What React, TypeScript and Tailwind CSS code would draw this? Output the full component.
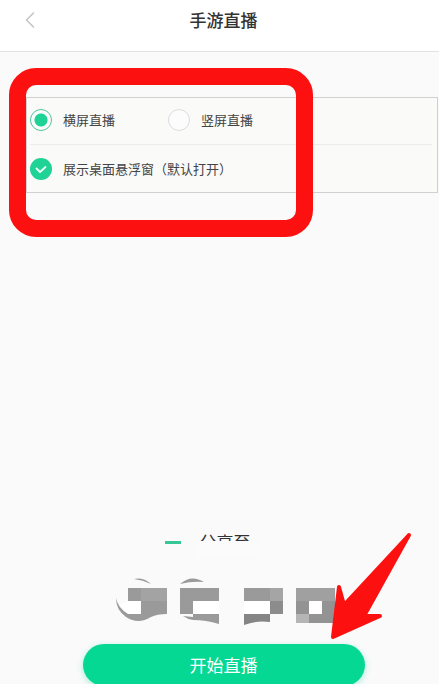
import { ChevronLeft } from "lucide-react";

interface Orientation {
    id: string;
    label: string;
}

const orientations: Orientation[] = [
    { id: "landscape", label: "横屏直播" },
    { id: "portrait", label: "竖屏直播" },
];

const Header = () => {
    return (
        <header className="flex h-[52px] shrink-0 items-center border-b border-[#e2e2e2] bg-white pr-3 pb-3 pl-4">
            <button type="button" aria-label="返回" className="text-[#c4c4c4]">
                <ChevronLeft className="size-7" strokeWidth={1.3} />
            </button>
            <h1 className="flex-1 pr-6 text-center text-[17px] leading-6 font-medium text-[#333]">手游直播</h1>
        </header>
    );
};

const OrientationRow = () => {
    return (
        <div className="flex h-[47px] items-center gap-[53px] border-b border-[#ececec] pb-0.5">
            {orientations.map((item, index) => (
                <label key={item.id} htmlFor={item.id} className="flex items-center gap-[11px]">
                    <input
                        id={item.id}
                        type="radio"
                        name="orientation"
                        defaultChecked={index === 0}
                        className="size-[22px] appearance-none rounded-full border border-[#dcdcdc] bg-[#fcfcfc] checked:border-[#4fc596] checked:bg-[radial-gradient(circle,#1fd295_6px,#fcfcfc_7px)]"
                    />
                    <span>{item.label}</span>
                </label>
            ))}
        </div>
    );
};

const FloatingWindowRow = () => {
    return (
        <label htmlFor="floating" className="flex h-[47px] items-center gap-[11px]">
            <span className="grid size-[22px] place-items-center">
                <input
                    id="floating"
                    type="checkbox"
                    defaultChecked
                    className="col-start-1 row-start-1 size-[22px] appearance-none rounded-full bg-[#1fd295]"
                />
                <svg
                    viewBox="0 0 22 22"
                    className="pointer-events-none col-start-1 row-start-1 size-[22px]"
                    fill="none"
                    stroke="#f2fff9"
                    strokeWidth="1.8"
                    strokeLinecap="round"
                    strokeLinejoin="round"
                >
                    <path d="M6.5 10.5 L10 14 L15.5 9" />
                </svg>
            </span>
            <span>展示桌面悬浮窗（默认打开）</span>
        </label>
    );
};

// pixelated share icons
const ShareIcons = () => {
    return (
        <svg viewBox="0 0 224 54" className="h-[54px] w-[224px]" aria-hidden="true">
            <path d="M18 5 Q27 3 35 10 Q27 6 18 5Z" fill="#9a9a9a" />
            <path d="M12 27 H25 V40 H12 L3 31Z" fill="#fff" />
            <path d="M0 24 Q2 34 12 40 H51 Q41 40 35 43 Q22 51 10 43 Q0 36 0 24Z" fill="#9a9a9a" />
            <path d="M12 14 H51 V40 H25 V27 H12Z" fill="#9a9a9a" />
            <path d="M25 14 H51 V27 H25Z" fill="#a3a3a3" />
            <path d="M64 10 Q75 0 88 8 Q76 7 64 10Z" fill="#9a9a9a" />
            <path d="M64 14 H103 V27 H77 V40 H64Z" fill="#9a9a9a" />
            <path d="M77 27 H103 V40 H77Z" fill="#fff" />
            <path d="M67 42 L77 43 V40 H103 V50 Q90 46 77 46 Q71 45 67 42Z" fill="#9a9a9a" />
            <path d="M128 14 H167 V27 H128Z" fill="#9a9a9a" />
            <path d="M154 14 H167 V27 H154Z" fill="#a5a5a5" />
            <path d="M128 27 H154 V40 H128Z" fill="#fff" />
            <path d="M154 27 H167 V40 H154Z" fill="#8c8c8c" />
            <path d="M128 40 H154 V48 Q141 46 128 51Z" fill="#858585" />
            <path d="M180 14 H219 V49 H180Z" fill="#939393" />
            <path d="M180 14 H219 V27 H180Z" fill="#a0a0a0" />
            <path d="M193 27 H206 V40 H193Z" fill="#fff" />
            <path d="M180 40 H193 V49 H180Z" fill="#b5b5b5" />
        </svg>
    );
};

export default function App() {
    return (
        <div className="relative flex min-h-screen flex-col overflow-hidden bg-[#fafafb] font-['Noto_Sans_CJK_SC',sans-serif] text-[#444]">
            <Header />

            <main className="flex flex-1 flex-col">
                <div className="relative pt-[45px] pr-px pl-[26px]">
                    <section className="border border-[#d0d0d0] bg-[#fafaf9] pr-[5px] pl-[3px] text-[13px] leading-5">
                        <OrientationRow />
                        <FloatingWindowRow />
                    </section>
                    {/* highlight frame */}
                    <div className="pointer-events-none absolute top-4 left-[9px] h-[169px] w-[304px] rounded-[27px] border-[17px] border-[#fd1010]" />
                </div>

                <div className="mt-auto flex flex-col items-center pl-2">
                    <div className="relative flex items-center gap-[19px] pr-8">
                        <span className="h-[3px] w-4 bg-[#36c796]" />
                        <h2 className="text-[17px] leading-6 text-[#333]">分享至</h2>
                        {/* smudge over the lower part of the title */}
                        <span className="absolute top-[11px] right-6 h-4 w-[62px] bg-[#fbfbfc]" />
                    </div>
                    <div className="mt-5 pl-2">
                        <ShareIcons />
                    </div>
                    <button
                        type="button"
                        className="mt-4 -mb-0.5 h-[42px] w-[282px] shrink-0 rounded-full bg-[#05d893] text-[17px] leading-6 text-white shadow-[0_2px_6px_rgba(5,216,147,0.35)]"
                    >
                        开始直播
                    </button>
                </div>
            </main>

            <svg
                viewBox="0 0 82 108"
                className="pointer-events-none absolute right-[27px] bottom-11 h-[108px] w-[82px]"
                aria-hidden="true"
            >
                <path
                    d="M79 3 L34 84 L50 84 L3 105 L9 55 L14 73 Z"
                    fill="#fd1010"
                    stroke="#fd1010"
                    strokeWidth="4"
                    strokeLinejoin="round"
                />
            </svg>
        </div>
    );
}
